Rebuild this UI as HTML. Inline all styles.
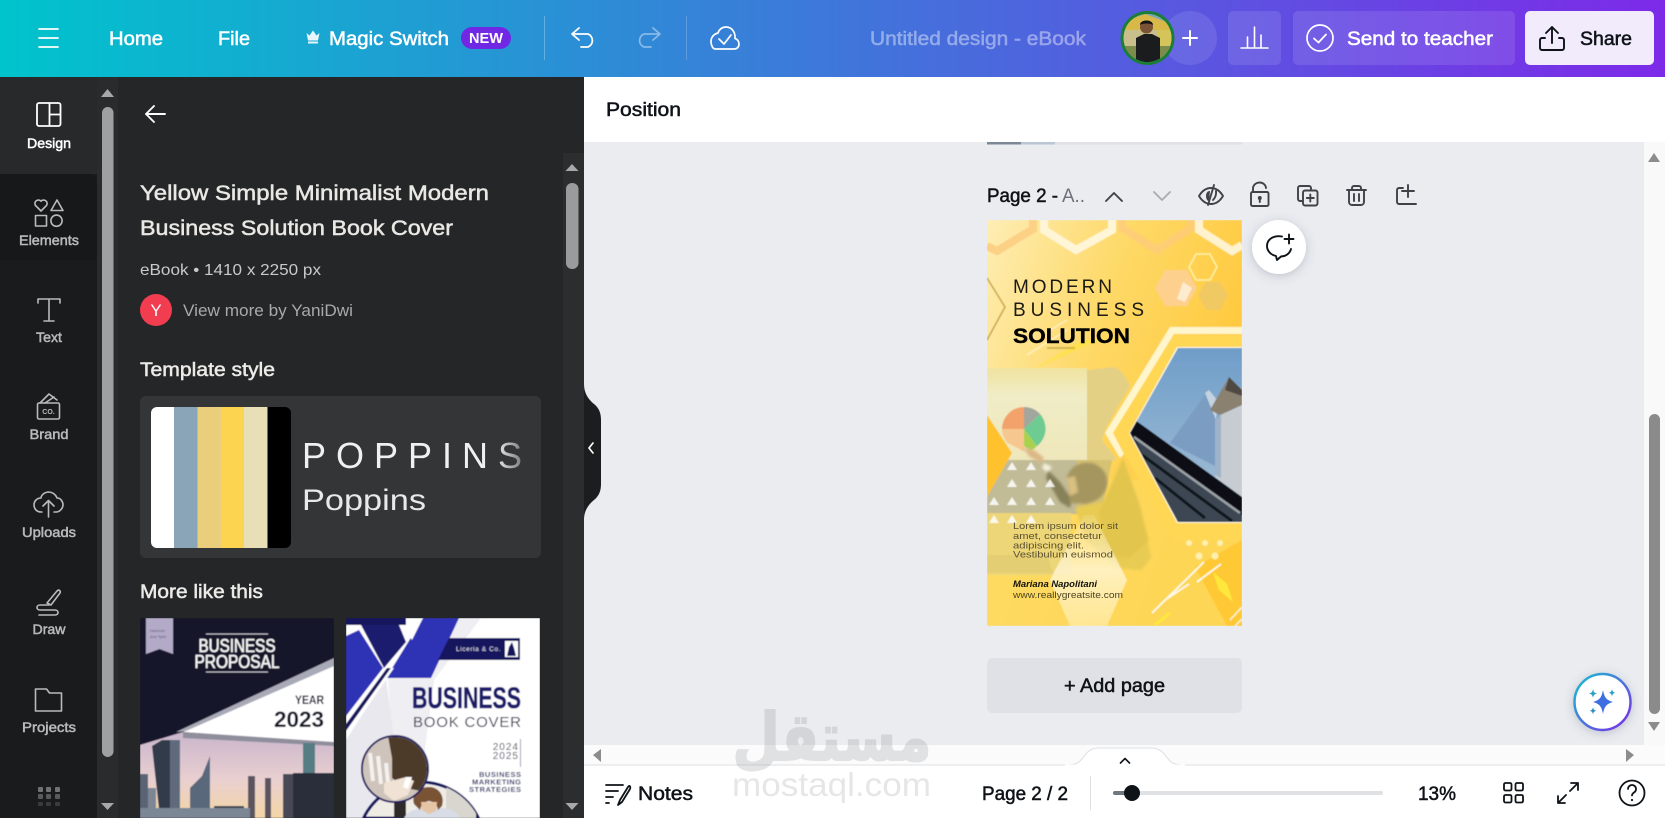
<!DOCTYPE html>
<html lang="en">
<head>
<meta charset="utf-8">
<title>Untitled design - eBook</title>
<style>
html,body{margin:0;padding:0;width:1665px;height:818px;overflow:hidden;background:#ebecf0}
svg{display:block}
text{font-family:"Liberation Sans","DejaVu Sans",sans-serif}
.m{stroke:currentColor;stroke-width:.5px}
.rl{font-size:14px;text-anchor:middle;fill:#b9babb;color:#b9babb}
.ic{fill:none;stroke:#b9babb;stroke-width:1.6;stroke-linecap:round;stroke-linejoin:round}
.tb{font-size:19px;fill:#fff;color:#fff}
.ti{fill:none;stroke:#fff;stroke-width:1.8;stroke-linecap:round;stroke-linejoin:round}
.pi{fill:none;stroke:#3f4349;stroke-width:1.9;stroke-linecap:round;stroke-linejoin:round}
.bi{fill:none;stroke:#0e1318;stroke-width:1.8;stroke-linecap:round;stroke-linejoin:round}
.dk{fill:#0e1318;color:#0e1318}
</style>
</head>
<body>
<svg xmlns="http://www.w3.org/2000/svg" width="1665" height="818" viewBox="0 0 1665 818">
<defs>
<linearGradient id="top" x1="0" x2="1" y1="0" y2="0"><stop offset="0" stop-color="#00c4cc"/><stop offset="1" stop-color="#7d2ae8"/></linearGradient>
<linearGradient id="pg" x1="0" y1="0" x2="1" y2=".55"><stop offset="0" stop-color="#feedb4"/><stop offset=".45" stop-color="#fed966"/><stop offset="1" stop-color="#ffc533"/></linearGradient>
<linearGradient id="fade" x1="0" x2="1" y1="0" y2="0"><stop offset="0" stop-color="#f0f0f0"/><stop offset=".88" stop-color="#f0f0f0"/><stop offset="1" stop-color="#7d7d7f"/></linearGradient>
<linearGradient id="ring" x1="0" y1="0" x2="1" y2="1"><stop offset="0" stop-color="#18c1cf"/><stop offset="1" stop-color="#7d2ae8"/></linearGradient>
<linearGradient id="sky" x1="0" y1="0" x2="0" y2="1"><stop offset="0" stop-color="#6e9dc8"/><stop offset="1" stop-color="#a8c1d8"/></linearGradient>
<linearGradient id="dusk" x1="0" y1="0" x2="0" y2="1"><stop offset="0" stop-color="#c9b6cc"/><stop offset=".55" stop-color="#e9cfd0"/><stop offset="1" stop-color="#f3d6a6"/></linearGradient>
<linearGradient id="scr" x1="0" y1="0" x2="0" y2="1"><stop offset="0" stop-color="#f0e3a0"/><stop offset=".3" stop-color="#f0ecc6"/><stop offset="1" stop-color="#efe7ba"/></linearGradient>
<linearGradient id="hx" x1="0" y1="0" x2="0" y2="1"><stop offset="0" stop-color="#fff5d0" stop-opacity=".15"/><stop offset=".5" stop-color="#fff5d0" stop-opacity=".85"/><stop offset="1" stop-color="#fff0b8" stop-opacity=".6"/></linearGradient>
<filter id="sh" x="-40%" y="-40%" width="180%" height="180%"><feDropShadow dx="0" dy="2" stdDeviation="5" flood-color="#40576d" flood-opacity=".28"/></filter>
<filter id="sf"><feGaussianBlur stdDeviation=".5"/></filter>
<filter id="sf2"><feGaussianBlur stdDeviation="1.400"/></filter>
<clipPath id="cpg"><rect width="255" height="406"/></clipPath>
<clipPath id="cphoto"><polygon points="143,213 191,128 255,128 255,302 191,302"/></clipPath>
<clipPath id="cav"><circle cx="1147.500" cy="38" r="24"/></clipPath>
<clipPath id="cswatch"><rect x="151" y="407" width="140" height="141" rx="6"/></clipPath>
<clipPath id="ct1"><rect width="194" height="200"/></clipPath>
<clipPath id="cc1"><circle cx="49" cy="151" r="32"/></clipPath>
<clipPath id="cc2"><path d="M17.500 200A64 64 0 0 1 132.500 200Z"/></clipPath>
</defs>

<!-- canvas -->
<rect width="1665" height="818" fill="#ebecf0"/>

<!-- previous page sliver -->
<rect x="987" y="142" width="255" height="2.500" fill="#e0e1e5"/>
<rect x="987" y="142" width="34" height="2.500" fill="#7d8897"/>
<rect x="1021" y="142" width="34" height="2.500" fill="#bac6d4"/>

<!-- page header -->
<text x="987" y="202" font-size="19" class="m" fill="#0e1318" color="#0e1318" textLength="71" lengthAdjust="spacingAndGlyphs">Page 2 -</text>
<text x="1062" y="202" font-size="19" fill="#6d7078" textLength="23" lengthAdjust="spacingAndGlyphs">A..</text>
<path class="pi" d="M1106 201l8-8 8 8"/>
<path class="pi" d="M1154 192l8 8 8-8" style="stroke:#a9acb2"/>
<g class="pi">
<path d="M1199 196c3-5 7-8 12-8s9 3 12 8c-3 5-7 8-12 8s-9-3-12-8z"/>
<path d="M1210 191c-3 0-4 2.500-4 5s1 5 3 5z" fill="#3f4349" stroke="none"/>
<path d="M1216 191c.5 4-1 7-3 9"/>
<path d="M1214 185l-6 20"/>
</g>
<g class="pi">
<rect x="1251" y="192" width="17.500" height="14" rx="1.500"/>
<path d="M1253 192v-3a6.500 6 0 0 1 13-1"/>
<path d="M1259.800 198v4"/>
<circle cx="1259.800" cy="198" r="1" fill="#3f4349"/>
</g>
<g class="pi">
<path d="M1302 201h-2a2 2 0 0 1-2-2v-11a2 2 0 0 1 2-2h9a2 2 0 0 1 2 2v1"/>
<rect x="1303" y="190.500" width="14.500" height="15" rx="2"/>
<path d="M1310.300 194.500v7M1306.800 198h7"/>
</g>
<g class="pi">
<path d="M1347 190h19M1352 190v-2a2 2 0 0 1 2-2h5a2 2 0 0 1 2 2v2"/>
<path d="M1349 190v12a3 3 0 0 0 3 3h9a3 3 0 0 0 3-3v-12"/>
<path d="M1354 194v7M1359 194v7"/>
</g>
<g class="pi">
<path d="M1403 188h-4a2 2 0 0 0-2 2v12a2 2 0 0 0 2 2h17"/>
<path d="M1408 185v12M1402 191h12"/>
</g>

<!-- page design -->
<g transform="translate(987,220)" clip-path="url(#cpg)">
<g filter="url(#sf)">
<rect width="255" height="406" fill="url(#pg)"/>
<rect y="260" width="255" height="146" fill="#fed95e" opacity=".8"/>
<!-- top hex bands -->
<path d="M0 26l10 5 36-22V0" fill="none" stroke="#fcd085" stroke-width="8"/>
<path d="M57 0v10l32 20 36-20V0" fill="none" stroke="#fff6d8" stroke-width="8"/>
<path d="M135 0v8l35 22 34-22V0" fill="none" stroke="#fdcb7c" stroke-width="8" opacity=".75"/>
<path d="M212 0v10l33 21 10-6" fill="none" stroke="#fff3cf" stroke-width="8"/>
<!-- small hexes -->
<polygon points="202,47 209,34 223,34 230,47 223,60 209,60" fill="none" stroke="#fff2a8" stroke-width="1.500"/>
<polygon points="168,68 178,50 200,50 210,68 200,86 178,86" fill="#fdd08d"/>
<path d="M196 62l9 6-7 14-8-3z" fill="#fff" opacity=".6"/>
<polygon points="211,75 219,62 233,62 241,75 233,90 219,90" fill="#f1c963"/>
<!-- chevron -->
<path d="M0 58l18 29L0 120" fill="none" stroke="#c9a74a" stroke-width="1.600"/>
<!-- streaks -->
<path d="M42 152l50-30 30-6-42 18z" fill="#ffe23e" opacity=".7"/>
<path d="M40 135l40-25M60 112l20-12" stroke="#fff" stroke-width="1.600" opacity=".5"/>
<path d="M60 128h28" stroke="#b49a36" stroke-width="2" opacity=".6"/>
<!-- meeting photo -->
<rect x="0" y="148" width="100" height="93" fill="url(#scr)"/>
<path d="M100 150l27-3c6 2 11 8 16 19l-14 24-10 18-4 12 14 18-2 3H100z" fill="#e4d084"/>
<rect x="0" y="240" width="90" height="54" fill="#c1bb96"/>
<path d="M90 240h35l-10 50-25 4z" fill="#d6c273"/>
<rect x="0" y="293" width="84" height="62" fill="#ecd678"/>
<path d="M0 335h60l6 18H0z" fill="#e1ca70" opacity=".7"/>
<path d="M37 209V187a22 22 0 0 0-22 22z" fill="#f2a26b"/>
<path d="M15 209a22 22 0 0 0 5 13.500l17 9V209z" fill="#f6c88f"/>
<path d="M37 187a22 22 0 0 1 16 7L37 209z" fill="#a2a69c"/>
<path d="M53 194a22 22 0 0 1-3 32L37 209z" fill="#6ecb92"/>
<path d="M37 209l13 17-6 5-7-5z" fill="#a7d24d"/>
<g filter="url(#sf2)">
<path d="M35 227l12 3 10 8-3 5-11-6z" fill="#dcb787"/>
<path d="M57 243l8 4-4 6-6-5z" fill="#f4efdc"/>
<path d="M61 250l12 12 12 18-2 8-10-6-14-24z" fill="#87815a"/>
<path d="M88 288l28-6 4-8 16-36 18 50 10 50-10 12-24-2-30-26z" fill="#e8cb52"/>
<path d="M120 274l16-36 14 40 12 42-20 18-22-2-8-44z" fill="#dfc24c" opacity=".7"/>
<path d="M83 283l-3-26c3-11 14-16 25-14 11 3 17 13 15 23-3 11-11 16-22 18z" fill="#a59660"/>
<path d="M80 258l8-2 3 16-8 4z" fill="#d9c080"/>
</g>
<polygon points="0,195 25,233 0,277" fill="#ffc22e"/>
<g fill="#fff" opacity=".85">
<polygon points="25,242 30,250 20,250"/><polygon points="44,242 49,250 39,250"/>
<polygon points="25,259 30,267 20,267"/><polygon points="44,259 49,267 39,267"/><polygon points="63,259 68,267 58,267"/>
<polygon points="7,277 12,285 2,285"/><polygon points="25,277 30,285 20,285"/><polygon points="44,277 49,285 39,285"/><polygon points="63,277 68,285 58,285"/>
<polygon points="7,295 12,303 2,303"/><polygon points="25,295 30,303 20,303"/><polygon points="44,295 49,303 39,303"/>
</g>
<!-- big hex -->
<polygon points="126,213 187,115 255,115 255,322 187,322" fill="#ffd754"/>
<polygon points="118,213 183,107 255,107 255,114 187,114 126,213 137,234 133,238" fill="#fff6cd"/>
<polygon points="142,213 190,127 255,127 255,303 190,303" fill="#fff8e6"/>
<g clip-path="url(#cphoto)">
<rect x="140" y="125" width="120" height="180" fill="url(#sky)"/>
<polygon points="183,223 220,172 230,183 230,247" fill="#7b9dc2"/>
<polygon points="218,173 222,170 231,181 229,200" fill="#c4d3e0"/>
<polygon points="233,195 255,185 255,277 228,257" fill="#c6ccd2"/>
<polygon points="228,200 234,195 234,258 228,255" fill="#9eb3c8"/>
<polygon points="223,190 242,157 255,170 255,185 233,195" fill="#8b8171"/>
<polygon points="242,157 255,170 255,176 238,170" fill="#4f4a42"/>
<polygon points="148,200 255,277 255,305 190,305 140,215" fill="#0d0f12"/>
<polygon points="146,215 253,293 255,296 255,305 190,305" fill="#3c4752"/>
<path d="M147 217l106 76" stroke="#9aa0a6" stroke-width="2.500" fill="none"/>
<path d="M155 235l90 66M168 258l50 40" stroke="#11161b" stroke-width="3" fill="none"/>
</g>
<!-- lower shapes -->
<polygon points="63,360 97,295 107,295 140,360 120,406 83,406" fill="url(#hx)"/>
<polygon points="208,347 255,320 255,406 240,406" fill="#ffc935"/>
<path d="M226 352l14 12 6 18-14-12z" fill="#ffe83a"/>
<g fill="#fff0ae"><circle cx="202" cy="323" r="3"/><circle cx="218" cy="323" r="3"/><circle cx="233" cy="323" r="3"/><circle cx="212" cy="336" r="3.500"/><circle cx="228" cy="336" r="3.500"/></g>
<path d="M165 393l52-51M178 380l24-16M210 362l24-18" stroke="#fff" stroke-width="1.800" opacity=".9"/>
<path d="M168 405l15-12" stroke="#ffe83a" stroke-width="3"/>
<path d="M243 400l12-13M248 406l7-7" stroke="#fff" stroke-width="1.500" opacity=".8"/>
</g>
<text x="26" y="73" font-size="19" fill="#1c1a12" textLength="99" lengthAdjust="spacing">MODERN</text>
<text x="26" y="96" font-size="19" fill="#1c1a12" textLength="131" lengthAdjust="spacing">BUSINESS</text>
<text x="26" y="123" font-size="21" font-weight="700" fill="#000" stroke="#000" stroke-width=".4" textLength="117" lengthAdjust="spacingAndGlyphs">SOLUTION</text>
<g font-size="9.500" fill="#5b5030">
<text x="26" y="309" textLength="105" lengthAdjust="spacingAndGlyphs">Lorem ipsum dolor sit</text>
<text x="26" y="319" textLength="89" lengthAdjust="spacingAndGlyphs">amet, consectetur</text>
<text x="26" y="328.500" textLength="71" lengthAdjust="spacingAndGlyphs">adipiscing elit.</text>
<text x="26" y="337.500" textLength="100" lengthAdjust="spacingAndGlyphs">Vestibulum euismod</text>
</g>
<text x="26" y="367" font-size="9.500" font-weight="700" font-style="italic" fill="#14120a" textLength="84" lengthAdjust="spacingAndGlyphs">Mariana Napolitani</text>
<text x="26" y="378" font-size="9.500" fill="#4d4522" textLength="110" lengthAdjust="spacingAndGlyphs">www.reallygreatsite.com</text>
</g>

<!-- comment bubble -->
<circle cx="1279" cy="247" r="27" fill="#fff" filter="url(#sh)"/>
<g fill="none" stroke="#0e1318" stroke-width="1.900" stroke-linecap="round" stroke-linejoin="round">
<path d="M1282 236.500C1274 235 1267 239 1267 246C1267 251 1271 255 1276 256L1277 260L1281 256.500C1286 256.500 1290 253 1291 249"/>
<path d="M1289 234.500v9M1284.500 239h9"/>
</g>

<!-- add page -->
<rect x="987" y="658" width="255" height="55" rx="5" fill="#dfe1e7"/>
<text x="1114.500" y="692" font-size="19" text-anchor="middle" class="m dk" textLength="101" lengthAdjust="spacingAndGlyphs">+ Add page</text>

<!-- right scrollbar -->
<rect x="1644" y="142" width="21" height="603" fill="#f9f9fa"/>
<polygon points="1654,153 1660,162 1648,162" fill="#8c8c8c"/>
<rect x="1649" y="414" width="11" height="300" rx="5.500" fill="#8b8b8b"/>
<polygon points="1654,731 1660,722 1648,722" fill="#8c8c8c"/>

<!-- AI button -->
<circle cx="1602.500" cy="702" r="28" fill="#fff" stroke="url(#ring)" stroke-width="2.500" filter="url(#sh)"/>
<path d="M1603 690c1.500 8 3.500 10 10 12-6.500 2-8.500 4-10 12-1.500-8-3.500-10-10-12 6.500-2 8.500-4 10-12z" fill="#3d6fe0"/>
<path d="M1593 689c.5 3 1.500 4 4 4.500-2.500.5-3.500 1.500-4 4.500-.5-3-1.500-4-4-4.500 2.500-.5 3.500-1.500 4-4.500z" fill="#2aa0c8"/>
<path d="M1612 689c.4 2.500 1.200 3.300 3.500 3.800-2.300.5-3.100 1.300-3.500 3.800-.4-2.500-1.200-3.300-3.500-3.800 2.300-.5 3.100-1.300 3.500-3.800z" fill="#2aa0c8"/>
<path d="M1593 707c.4 2.500 1.200 3.300 3.500 3.800-2.300.5-3.100 1.300-3.500 3.800-.4-2.500-1.200-3.300-3.500-3.800 2.300-.5 3.100-1.300 3.500-3.800z" fill="#2a8ec8"/>

<!-- bottom bar -->
<rect x="584" y="745" width="1081" height="20" fill="#fbfbfb"/>
<rect x="584" y="765" width="1081" height="53" fill="#fff"/>
<rect x="584" y="764.500" width="1081" height="1" fill="#dedfe2"/>
<polygon points="593,755 601,749 601,762" fill="#8c8c8c"/>
<polygon points="1634,755 1626,749 1626,762" fill="#8c8c8c"/>
<path d="M1063 765c15 0 16-2 22-10 3-4 8-7 14-7h52c6 0 11 3 14 7 6 8 7 10 22 10z" fill="#fff" stroke="#dedfe2"/>
<rect x="1065" y="764.500" width="120" height="2" fill="#fff"/>
<path d="M1120.500 763l4.500-4.500 4.500 4.500" fill="none" stroke="#0e1318" stroke-width="1.600" stroke-linecap="round" stroke-linejoin="round"/>

<g class="bi">
<path d="M606 785h17M606 791h12M606 797h7M606 803h3"/>
<path d="M628 787l-8 13-2 5 4-3 8-13c1-3-1-4-2-2z"/>
</g>
<text x="638" y="800" font-size="19" class="m dk" textLength="55" lengthAdjust="spacingAndGlyphs">Notes</text>
<text x="982" y="800" font-size="19" class="m dk" textLength="86" lengthAdjust="spacingAndGlyphs">Page 2 / 2</text>
<rect x="1090" y="776" width="1" height="34" fill="#dedfe2"/>
<rect x="1113" y="791" width="270" height="4" rx="2" fill="#dfe1e4"/>
<rect x="1113" y="791" width="18" height="4" rx="2" fill="#72767d"/>
<circle cx="1132" cy="793" r="8" fill="#0e1318"/>
<text x="1418" y="800" font-size="19" class="m dk" textLength="38" lengthAdjust="spacingAndGlyphs">13%</text>
<g class="bi">
<rect x="1504" y="783" width="7.500" height="7.500" rx="1.500"/><rect x="1515.500" y="783" width="7.500" height="7.500" rx="1.500"/>
<rect x="1504" y="795" width="7.500" height="7.500" rx="1.500"/><rect x="1515.500" y="795" width="7.500" height="7.500" rx="1.500"/>
<path d="M1558 803l8-8M1558 796v7h7M1578 783l-8 8M1571 783h7v7"/>
<circle cx="1632" cy="793" r="12.500"/>
<path d="M1628 789a4 4 0 1 1 6 3.500c-1.500 1-2 1.800-2 3"/>
</g>
<circle cx="1632" cy="800" r="1.100" fill="#0e1318"/>

<!-- watermark -->
<text x="832" y="760" font-size="66" font-weight="700" text-anchor="middle" direction="rtl" fill="#8f9094" opacity=".24" stroke="#8f9094" stroke-width="2" style="font-family:'DejaVu Sans',sans-serif" textLength="199" lengthAdjust="spacingAndGlyphs">مستقل</text>
<text x="732" y="796" font-size="33" fill="#8f9094" opacity=".22" textLength="199" lengthAdjust="spacingAndGlyphs">mostaql.com</text>

<!-- position bar -->
<rect x="584" y="77" width="1081" height="65" fill="#fff"/>
<text x="606" y="116" font-size="19" class="m dk" textLength="75" lengthAdjust="spacingAndGlyphs">Position</text>

<!-- side panel -->
<rect x="0" y="77" width="584" height="741" fill="#252628"/>
<rect x="563" y="153" width="21" height="665" fill="#2c2d2f"/>
<polygon points="572,164 578.500,171 565.500,171" fill="#a8a8a8"/>
<rect x="566" y="183" width="12.500" height="86" rx="6" fill="#9b9b9b"/>
<polygon points="572,810 578.500,803 565.500,803" fill="#a8a8a8"/>

<path d="M165 114h-19M154 106l-8 8 8 8" fill="none" stroke="#fff" stroke-width="1.900" stroke-linecap="round" stroke-linejoin="round"/>

<text x="140" y="200" font-size="21" class="m" fill="#e9e8e4" color="#e9e8e4" textLength="349" lengthAdjust="spacingAndGlyphs">Yellow Simple Minimalist Modern</text>
<text x="140" y="235" font-size="21" class="m" fill="#e9e8e4" color="#e9e8e4" textLength="313" lengthAdjust="spacingAndGlyphs">Business Solution Book Cover</text>
<text x="140" y="275" font-size="16" fill="#c8c9ca" textLength="181" lengthAdjust="spacingAndGlyphs">eBook • 1410 x 2250 px</text>
<circle cx="156" cy="310" r="16" fill="#f23d50"/>
<text x="156" y="316" font-size="17" text-anchor="middle" fill="#fff">Y</text>
<text x="183" y="316" font-size="16.500" fill="#a8a9ab" textLength="170" lengthAdjust="spacingAndGlyphs">View more by YaniDwi</text>
<text x="140" y="376" font-size="19" class="m" fill="#ecebe8" color="#ecebe8" textLength="135" lengthAdjust="spacingAndGlyphs">Template style</text>

<rect x="140" y="396" width="401" height="162" rx="6" fill="#343537"/>
<g clip-path="url(#cswatch)">
<rect x="151" y="407" width="24" height="141" fill="#fff"/>
<rect x="174" y="407" width="24" height="141" fill="#8aa4b8"/>
<rect x="197.500" y="407" width="24" height="141" fill="#e9cf7b"/>
<rect x="221" y="407" width="24" height="141" fill="#fdd450"/>
<rect x="244" y="407" width="24" height="141" fill="#e9dfb6"/>
<rect x="267.500" y="407" width="24" height="141" fill="#000"/>
</g>
<text x="302" y="468" font-size="36" fill="url(#fade)" textLength="220" lengthAdjust="spacing">POPPINS</text>
<text x="302" y="510" font-size="30" fill="#e9e9e9" textLength="124" lengthAdjust="spacingAndGlyphs">Poppins</text>

<text x="140" y="598" font-size="19" class="m" fill="#ecebe8" color="#ecebe8" textLength="123" lengthAdjust="spacingAndGlyphs">More like this</text>

<!-- thumb 1 -->
<g transform="translate(140,618)" clip-path="url(#ct1)">
<g filter="url(#sf)">
<rect width="194" height="200" fill="#15162a"/>
<polygon points="194,42 43,114 194,126" fill="#fff"/>
<polygon points="194,40 36,114 46,113 194,48" fill="#a9aab8"/>
<polygon points="0,127 43,114 194,126 194,200 0,200" fill="url(#dusk)"/>
<polygon points="43,114 194,124 194,128 43,120" fill="#8f8e9d"/>
<polygon points="6,0 33,0 33,36 19.500,31 6,36" fill="#b3aac8"/>
<g fill="#5a5670" font-size="4"><text x="10" y="14">Hanover</text><text x="10" y="20">and Tyler</text></g>
<path d="M66 16h62M66 54h62" stroke="#bfc0cc" stroke-width="1"/>
<text x="97" y="34" font-size="18" text-anchor="middle" class="m" fill="#f5f5f5" color="#f5f5f5" textLength="77" lengthAdjust="spacingAndGlyphs">BUSINESS</text>
<text x="97" y="50" font-size="18" text-anchor="middle" class="m" fill="#f5f5f5" color="#f5f5f5" textLength="85" lengthAdjust="spacingAndGlyphs">PROPOSAL</text>
<text x="184" y="86" font-size="12" text-anchor="end" font-weight="700" fill="#1b1c30" textLength="29" lengthAdjust="spacingAndGlyphs">YEAR</text>
<text x="184" y="109" font-size="22" text-anchor="end" font-weight="700" fill="#14152a" textLength="50" lengthAdjust="spacingAndGlyphs">2023</text>
<polygon points="12,128 22,122 40,122 40,200 20,200" fill="#333a49"/>
<rect x="30" y="122" width="10" height="78" fill="#5e6b7d"/>
<rect x="0" y="156" width="8" height="44" fill="#5a6473"/>
<rect x="8" y="170" width="8" height="30" fill="#7d8794"/>
<polygon points="50,200 50,170 62,158 70,138 70,200" fill="#5a687c"/>
<rect x="74" y="188" width="30" height="12" fill="#3a4050"/>
<rect x="108" y="158" width="7" height="42" fill="#5c5560"/>
<rect x="125" y="160" width="6" height="40" fill="#5c5560"/>
<rect x="143" y="156" width="10" height="44" fill="#4a4a55"/>
<rect x="163" y="125" width="12" height="32" fill="#567b84"/>
<rect x="153" y="155" width="41" height="45" fill="#2b2f3a"/>
<rect x="0" y="190" width="110" height="10" fill="#7c8796"/>
</g>
</g>

<!-- thumb 2 -->
<g transform="translate(346,618)" clip-path="url(#ct1)">
<g filter="url(#sf)">
<rect width="194" height="200" fill="#fff"/>
<polygon points="113,0 135,0 88,62 70,200 30,200 46,120 42,60 85,60" fill="#efeef3"/>
<polygon points="0,122 40,60 48,120 30,200 0,200" fill="#e9e8ee"/>
<rect width="60" height="7" fill="#14145f"/>
<polygon points="0,18 13,12 37,50 0,98" fill="#2e32b4"/>
<polygon points="15,7 53,7 60,24 38,50" fill="#1d1d6e"/>
<polygon points="77,0 113,0 85,60 40,60" fill="#2e32b4"/>
<polygon points="103,20 174,20 174,42 92,42" fill="#14145f"/>
<polygon points="57,14 65,0 69,0 61,16" fill="#fff"/>
<polygon points="64,19 74,0 77,0 66,22" fill="#fff"/>
<polygon points="0,100 38,50 41,50 0,106" fill="#fff"/>
<polygon points="0,106 41,50 45,50 0,113" fill="#14145f"/>
<polygon points="0,113 45,50 48,50 0,120" fill="#fff"/>
<text x="110" y="33" font-size="6.500" fill="#dfe0f0" letter-spacing=".6">Liceria &amp; Co.</text>
<rect x="159" y="23" width="13" height="16" fill="#fff"/>
<path d="M161 38l2-9 3-5 2 6 2 8z" fill="#14145f"/>
<text x="66" y="90" font-size="30" font-weight="700" fill="#1c1c6b" stroke="#1c1c6b" stroke-width=".5" textLength="109" lengthAdjust="spacingAndGlyphs">BUSINESS</text>
<text x="67" y="109" font-size="15" fill="#3d3f55" textLength="108" lengthAdjust="spacing">BOOK COVER</text>
<g font-size="10" fill="#4a4c60" text-anchor="end" letter-spacing="1">
<text x="173" y="132">2024</text><text x="173" y="141">2025</text>
</g>
<rect x="174" y="121" width="1" height="28" fill="#9a9bad"/>
<g font-size="7.500" font-weight="700" fill="#2b2c66" text-anchor="end">
<text x="175" y="159" textLength="42">BUSINESS</text><text x="175" y="166.500" textLength="49">MARKETING</text><text x="175" y="174" textLength="52">STRATEGIES</text>
</g>
<path d="M17.500 200A64 64 0 0 1 132.500 200Z" fill="#efece6" stroke="#14145f" stroke-width="3"/>
<g clip-path="url(#cc2)">
<rect x="48" y="178" width="12" height="22" fill="#2d2a2a"/>
<rect x="100" y="170" width="30" height="30" fill="#d9d6cf"/>
<path d="M58 200c3-6 10-9 20-10l20 0c8 1 14 5 16 10z" fill="#d8dce6"/>
<path d="M68 186c-3-9 5-17 15-17 10 0 16 9 13 19l-4 4c-1-5-3-8-9-9-6 1-8 5-9 9z" fill="#7a5236"/>
<path d="M75 184l16 0-1 9-7 3-7-4z" fill="#e6c4a6"/>
</g>
<circle cx="49" cy="151" r="33" fill="#e6e0da" stroke="#1e1e60" stroke-width="2"/>
<g clip-path="url(#cc1)">
<rect x="15" y="118" width="68" height="66" fill="#cfc4bb"/>
<polygon points="42,118 84,118 84,175 60,170 46,160 46,140" fill="#4e3a2b"/>
<path d="M24 135l3 28M32 138l3 28M40 145l2 20" stroke="#fff" stroke-width="4" opacity=".75"/>
<path d="M38 165l22-6 8 4-6 14-14 6-10-8z" fill="#f0e2d4"/>
<path d="M60 159l6 0-4 12-5-2z" fill="#fff"/>
</g>
</g>
</g>

<!-- collapse handle -->
<path d="M584 384c0 9 4 15 10 20 5 4 7 9 7 16v64c0 7-2 12-7 16-6 5-10 11-10 20z" fill="#1c1d1f"/>
<path d="M593 443l-4 5 4 5" fill="none" stroke="#fff" stroke-width="1.700" stroke-linecap="round" stroke-linejoin="round"/>

<!-- left rail -->
<rect x="0" y="77" width="98" height="741" fill="#1a1b1d"/>
<rect x="0" y="77" width="98" height="97" fill="#28292b"/>
<path d="M0 174h90a7 7 0 0 1 7 7v79H0z" fill="#17181a"/>
<rect x="97" y="77" width="21" height="741" fill="#2a2b2d"/>
<polygon points="107.500,89 114,97 101,97" fill="#a8a8a8"/>
<rect x="102" y="107" width="11.500" height="650" rx="5.800" fill="#a0a0a0"/>
<polygon points="107.500,810 114,803 101,803" fill="#a8a8a8"/>

<g fill="none" stroke="#fff" stroke-width="1.800" stroke-linejoin="round">
<rect x="37" y="103" width="23.500" height="23" rx="2"/>
<path d="M49.500 103v23M49.500 114.500h11"/>
</g>
<text x="49" y="148" class="rl m" style="fill:#fff;color:#fff" textLength="44" lengthAdjust="spacingAndGlyphs">Design</text>

<g class="ic">
<path d="M41 211l-5.500-5.500a3.500 3.500 0 0 1 5.500-4.300 3.500 3.500 0 0 1 5.500 4.300z"/>
<path d="M57 200l6 10.500H51z"/>
<rect x="35.500" y="215.500" width="11" height="10.500"/>
<circle cx="56.500" cy="220.700" r="5.600"/>
</g>
<text x="49" y="245" class="rl m" textLength="60" lengthAdjust="spacingAndGlyphs">Elements</text>

<g class="ic">
<path d="M38 303v-4h22v4M49 299v22M44 321h10"/>
</g>
<text x="49" y="342" class="rl m" textLength="26" lengthAdjust="spacingAndGlyphs">Text</text>

<g class="ic">
<rect x="37.500" y="403" width="22" height="16" rx="1.500"/>
<path d="M40 403l9-9 8 6M45 403l9-6"/>
</g>
<text x="48.500" y="414" font-size="7" font-weight="700" text-anchor="middle" fill="#b9babb">CO.</text>
<text x="49" y="439" class="rl m" textLength="39" lengthAdjust="spacingAndGlyphs">Brand</text>

<g class="ic">
<path d="M42 512h-1c-4 0-7-3-7-7s3-7 7-7c0-1 1-5 7-6 5 0 8 3 9 6 4 0 6 4 6 7s-3 7-7 7h-2"/>
<path d="M48.500 517v-16M43 506l5.500-5.500L54 506"/>
</g>
<text x="49" y="537" class="rl m" textLength="54" lengthAdjust="spacingAndGlyphs">Uploads</text>

<g class="ic">
<path d="M47 603l10-12c2-2 4 0 3 2l-9 12z"/>
<path d="M49 605H40c-4 0-4 5 0 5h15c4 0 4 5 0 5H39"/>
</g>
<text x="49" y="634" class="rl m" textLength="33" lengthAdjust="spacingAndGlyphs">Draw</text>

<g class="ic">
<path d="M35.500 711v-22h11l3 4h12v18z"/>
</g>
<text x="49" y="732" class="rl m" textLength="54" lengthAdjust="spacingAndGlyphs">Projects</text>

<g fill="#b9babb">
<g opacity=".55"><rect x="38" y="787" width="5" height="5" rx="1"/><rect x="46" y="787" width="5" height="5" rx="1"/><rect x="55" y="787" width="5" height="5" rx="1"/></g>
<g opacity=".4"><rect x="38" y="794" width="5" height="5" rx="1"/><rect x="46" y="794" width="5" height="5" rx="1"/><rect x="55" y="794" width="5" height="5" rx="1"/></g>
<g opacity=".2"><rect x="38" y="802" width="5" height="4" rx="1"/><rect x="46" y="802" width="5" height="4" rx="1"/><rect x="55" y="802" width="5" height="4" rx="1"/></g>
</g>

<!-- top bar -->
<rect width="1665" height="77" fill="url(#top)"/>
<path class="ti" d="M39 29h19M39 38h19M39 47h19"/>
<text x="109" y="45" class="tb m" textLength="54" lengthAdjust="spacingAndGlyphs">Home</text>
<text x="218" y="45" class="tb m" textLength="32" lengthAdjust="spacingAndGlyphs">File</text>
<path d="M306.500 33l3 2.500 3.500-5 3.500 5 3-2.500-1.500 7.500h-10z" fill="#fff" opacity=".9"/>
<rect x="308" y="41.500" width="10" height="2" fill="#fff" opacity=".9"/>
<text x="329" y="45" class="tb m" textLength="120" lengthAdjust="spacingAndGlyphs">Magic Switch</text>
<rect x="461" y="27" width="50" height="22" rx="11" fill="#7028e4"/>
<text x="486" y="43" font-size="14.500" font-weight="700" text-anchor="middle" fill="#fff" textLength="34" lengthAdjust="spacingAndGlyphs">NEW</text>
<rect x="544" y="16" width="1" height="44" fill="#fff" opacity=".28"/>
<path class="ti" d="M579 28l-7 6 7 6M572 34h16a7 7 0 0 1 0 13h-7"/>
<g opacity=".42"><path class="ti" d="M653 28l7 6-7 6M660 34h-16a7 7 0 0 0 0 13h7"/></g>
<rect x="686" y="16" width="1" height="44" fill="#fff" opacity=".2"/>
<path class="ti" d="M715 49h19c3 0 5-2 5-5 0-3-2-5-4-5.500.5-6-3-11.500-9-11.500-4 0-7 2.500-8 6-4 1-7 4-7 8.500 0 4 2 7.500 4 7.500z" style="stroke-width:1.700"/>
<path class="ti" d="M719 39l5 5 7-9" style="stroke-width:1.700"/>
<text x="870" y="45" font-size="19" fill="#fff" opacity=".42" class="m" style="color:#fff" textLength="216" lengthAdjust="spacingAndGlyphs">Untitled design - eBook</text>

<circle cx="1190" cy="38" r="27" fill="#fff" opacity=".1"/>
<path class="ti" d="M1190 31v14M1183 38h14" style="stroke-width:2"/>
<circle cx="1147.500" cy="38" r="27" fill="#1a7f36"/>
<g clip-path="url(#cav)">
<rect x="1122" y="13" width="52" height="52" fill="#c9bf8c"/>
<rect x="1122" y="13" width="52" height="16" fill="#7fa6b5"/>
<polygon points="1122,22 1145,14 1172,24 1172,30 1122,30" fill="#d9b84a"/>
<rect x="1158" y="30" width="16" height="26" fill="#d4c45a"/>
<rect x="1122" y="46" width="52" height="20" fill="#7c8c4c"/>
<path d="M1136 66V38l8-4h8l8 4v28z" fill="#1b1c1e"/>
<circle cx="1146.500" cy="27" r="6.500" fill="#7a5236"/>
<path d="M1140 25c0-6 13-6 13 0-3-2-10-2-13 0z" fill="#141414"/>
</g>
<rect x="1228" y="11" width="53" height="54" rx="5" fill="#fff" opacity=".11"/>
<path class="ti" d="M1241 48h27M1247.500 48V37M1254.500 48V27M1261 48V35" style="stroke-width:1.600"/>
<rect x="1293" y="11" width="222" height="54" rx="5" fill="#fff" opacity=".11"/>
<circle cx="1320" cy="38" r="13" fill="none" stroke="#fff" stroke-width="1.700"/>
<path class="ti" d="M1314 38.500l4.500 4 7.500-8"/>
<text x="1347" y="45" class="tb m" textLength="146" lengthAdjust="spacingAndGlyphs">Send to teacher</text>
<rect x="1525" y="11" width="129" height="54" rx="5" fill="#f2ebfb"/>
<g fill="none" stroke="#0e1318" stroke-width="1.900" stroke-linecap="round" stroke-linejoin="round">
<path d="M1552 43V27M1546 33l6-6 6 6"/>
<path d="M1545 38h-3a2 2 0 0 0-2 2v8a2 2 0 0 0 2 2h20a2 2 0 0 0 2-2v-8a2 2 0 0 0-2-2h-3"/>
</g>
<text x="1580" y="45" font-size="19" class="m dk" textLength="52" lengthAdjust="spacingAndGlyphs">Share</text>
</svg>
</body>
</html>
